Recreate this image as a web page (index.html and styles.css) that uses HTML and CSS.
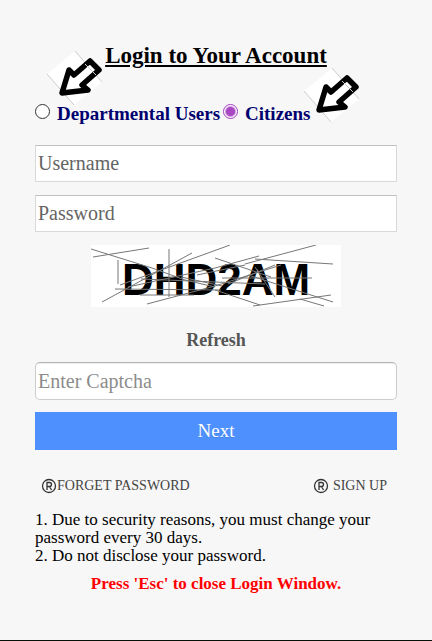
FILE: index.html
```
<!DOCTYPE html>
<html lang="en">
  <head>
    <meta charset="UTF-8">
    <meta name="viewport" content="width=device-width, initial-scale=1.0">
    <title>Login</title>
    <link rel="stylesheet" href="styles.css">
  </head>
  <body>
	<form class="login_card">
		<h1 class="headline">Login to Your Account</h1>

		<div class="user_type">
			<input class="radio" type="radio" name="userType" id="departmental" value="departmental">
			<label class="radio_label" for="departmental">Departmental Users</label>
			<input class="radio" type="radio" name="userType" id="citizens" value="citizens" checked>
			<label class="radio_label" for="citizens">Citizens</label>
			<svg class="arrow arrow_departmental" viewBox="0 0 56 56" aria-hidden="true">
				<path d="M28 0L55 31L27 54L0 23Z" fill="#fff"/>
				<path d="M28 0L55 31M0 23L27 54" stroke="#ccc"/>
				<path d="M15 42L22 19L27 24L43 10L52 19L35 34L41 39Z" fill="#fff" stroke="#000" stroke-width="5.5" stroke-linejoin="round"/>
				<path d="M38 13L49 24" stroke="#ccc"/>
			</svg>
			<svg class="arrow arrow_citizens" viewBox="0 0 56 56" aria-hidden="true">
				<path d="M28 0L55 31L27 54L0 23Z" fill="#fff"/>
				<path d="M28 0L55 31M0 23L27 54" stroke="#ccc"/>
				<path d="M15 42L22 19L27 24L43 10L52 19L35 34L41 39Z" fill="#fff" stroke="#000" stroke-width="5.5" stroke-linejoin="round"/>
				<path d="M38 13L49 24" stroke="#ccc"/>
			</svg>
		</div>

		<input class="field" type="text" name="username" placeholder="Username" aria-label="Username">
		<input class="field" type="password" name="password" placeholder="Password" aria-label="Password">

		<svg class="captcha" viewBox="0 0 250 62" role="img" aria-label="Captcha">
			<rect width="250" height="62" fill="#fff"/>
			<text class="captcha_text" x="31" y="50">DHD2AM</text>
			<path class="captcha_lines" d="M0 4L61 23L94 35L124 42M2 12L58 3M27 15V39M11 57L101 8M78 4V52M56 59L124 41L190 20M24 44L130 45M29 40L139 0M49 50H103M37 42L124 23L168 11M154 19L225 0M124 13L180 32M164 14L242 19M124 45L169 60M162 61L240 50M157 30L242 57M131 33H221M50 34L174 39M137 39L184 20M164 22L184 52M209 54L233 61M90 32L131 41M106 30L154 20"/>
		</svg>

		<button class="refresh" type="button">Refresh</button>

		<input class="field field_captcha" type="text" name="captcha" placeholder="Enter Captcha" aria-label="Enter Captcha">
		<button class="next" type="submit">Next</button>

		<div class="links">
			<a class="link" href="#forget"><svg class="icon" viewBox="0 0 16 16" aria-hidden="true"><circle cx="8" cy="8" r="6.5"/><path d="M6 12V4.5H8.5Q10.500 4.500 10.500 6.500T8.500 8.500H6M8.500 8.500L10.500 12"/></svg>FORGET PASSWORD</a>
			<a class="link" href="#signup"><svg class="icon" viewBox="0 0 16 16" aria-hidden="true"><circle cx="8" cy="8" r="6.5"/><path d="M6 12V4.5H8.5Q10.500 4.500 10.500 6.500T8.500 8.500H6M8.500 8.500L10.500 12"/></svg> SIGN UP</a>
		</div>

		<div class="notes">
			1. Due to security reasons, you must change your password every 30 days.<br>
			2. Do not disclose your password.
		</div>
		<div class="close_hint">Press 'Esc' to close Login Window.</div>
	</form>
  </body>
</html>
```

FILE: styles.css
```
body, html {
    margin: 0;
    padding: 0;
}
body {
    font-family: "Liberation Serif", "Times New Roman", serif;
    background: #f7f7f7;
}
.login_card {
    display: flex;
    flex-direction: column;
    box-sizing: border-box;
    min-height: 100vh;
    padding: 42px 35px 0;
    border-bottom: 1px solid #061006;
}
.headline {
    margin: 0 0 32px;
    font-size: 23px;
    line-height: 28px;
    text-align: center;
    text-decoration: underline;
}
.user_type {
    position: relative;
    display: flex;
    align-items: center;
    height: 24px;
    margin-bottom: 19px;
}
.radio {
    appearance: none;
    flex: none;
    box-sizing: border-box;
    width: 15px;
    height: 15px;
    margin: 0 7px 6px 0;
    border: 1px solid #333;
    border-radius: 50%;
    background: #fff;
}
.radio:checked {
    margin-left: 3px;
    border-color: #a33bc2;
    background: radial-gradient(circle, #a846c4 4px, #fff 6px);
}
.radio_label {
    color: #00006e;
    font-size: 19px;
    font-weight: bold;
    white-space: nowrap;
}
.arrow {
    position: absolute;
    width: 56px;
    height: 56px;
    fill: none;
    pointer-events: none;
}
.arrow_departmental {
    left: 12px;
    top: -51px;
}
.arrow_citizens {
    left: 269px;
    top: -34px;
}
.field {
    box-sizing: border-box;
    width: 100%;
    height: 37px;
    margin: 0 0 13px;
    padding: 0 2px;
    border: 1px solid #d9d9d9;
    border-top-color: #c0c0c0;
    background: #fff;
    font-family: inherit;
    font-size: 20px;
}
.field::placeholder {
    color: #646464;
}
.field_captcha {
    height: 38px;
    margin-bottom: 12px;
    border-color: #ccc;
    border-top-color: #b4b4b4;
    border-radius: 5px;
    box-shadow: inset 0 1px 1px #eee;
}
.field_captcha::placeholder {
    color: #8c8c8c;
}
.captcha {
    align-self: center;
    width: 250px;
    height: 62px;
}
.captcha_text {
    font-family: "Liberation Sans", Arial, sans-serif;
    font-size: 44px;
    font-weight: bold;
}
.captcha_lines {
    fill: none;
    stroke: #777;
    stroke-width: 1;
}
.refresh {
    align-self: center;
    margin: 22px 0 10px;
    padding: 0;
    border: 0;
    background: none;
    color: #555;
    font-family: inherit;
    font-size: 18px;
    font-weight: bold;
    line-height: 23px;
}
.next {
    height: 38px;
    padding: 0;
    border: 0;
    background: #4d90fe;
    color: #fff;
    font-family: inherit;
    font-size: 19px;
    text-shadow: 0 1px rgba(0, 0, 0, 0.1);
}
.links {
    display: flex;
    justify-content: space-between;
    margin: 28px 10px 17px 6px;
}
.link {
    display: flex;
    align-items: center;
    color: #444;
    font-size: 14px;
    line-height: 16px;
    text-decoration: none;
    white-space: pre;
}
.icon {
    width: 16px;
    height: 16px;
    fill: none;
    stroke: #333;
    stroke-width: 1.3;
}
.notes {
    font-size: 17px;
    line-height: 18px;
}
.close_hint {
    margin-top: 8px;
    color: #f00;
    font-size: 17px;
    font-weight: bold;
    line-height: 22px;
    text-align: center;
}
```
